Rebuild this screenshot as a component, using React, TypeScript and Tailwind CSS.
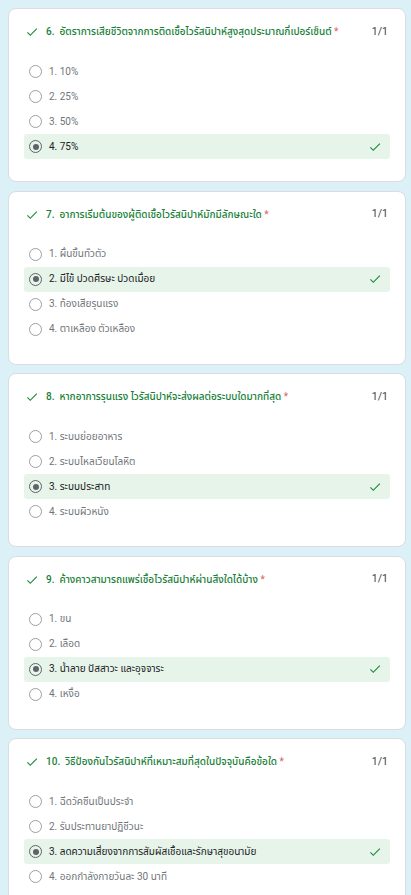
import React from "react";

type Q = { n: number; title: string; options: string[]; correct: number };

const questions: Q[] = [
  {
    n: 6,
    title: "อัตราการเสียชีวิตจากการติดเชื้อไวรัสนิปาห์สูงสุดประมาณกี่เปอร์เซ็นต์",
    options: ["1. 10%", "2. 25%", "3. 50%", "4. 75%"],
    correct: 3,
  },
  {
    n: 7,
    title: "อาการเริ่มต้นของผู้ติดเชื้อไวรัสนิปาห์มักมีลักษณะใด",
    options: ["1. ผื่นขึ้นทั่วตัว", "2. มีไข้ ปวดศีรษะ ปวดเมื่อย", "3. ท้องเสียรุนแรง", "4. ตาเหลือง ตัวเหลือง"],
    correct: 1,
  },
  {
    n: 8,
    title: "หากอาการรุนแรง ไวรัสนิปาห์จะส่งผลต่อระบบใดมากที่สุด",
    options: ["1. ระบบย่อยอาหาร", "2. ระบบไหลเวียนโลหิต", "3. ระบบประสาท", "4. ระบบผิวหนัง"],
    correct: 2,
  },
  {
    n: 9,
    title: "ค้างคาวสามารถแพร่เชื้อไวรัสนิปาห์ผ่านสิ่งใดได้บ้าง",
    options: ["1. ขน", "2. เลือด", "3. น้ำลาย ปัสสาวะ และอุจจาระ", "4. เหงื่อ"],
    correct: 2,
  },
  {
    n: 10,
    title: "วิธีป้องกันไวรัสนิปาห์ที่เหมาะสมที่สุดในปัจจุบันคือข้อใด",
    options: [
      "1. ฉีดวัคซีนเป็นประจำ",
      "2. รับประทานยาปฏิชีวนะ",
      "3. ลดความเสี่ยงจากการสัมผัสเชื้อและรักษาสุขอนามัย",
      "4. ออกกำลังกายวันละ 30 นาที",
    ],
    correct: 2,
  },
];

function Check({ className }: { className?: string }) {
  return (
    <svg viewBox="0 0 24 24" className={className} fill="currentColor">
      <path d="M9 16.17L4.83 12l-1.42 1.41L9 19 21 7l-1.41-1.41z" />
    </svg>
  );
}

function Card({ q }: { q: Q }) {
  return (
    <div className="h-[174px] shrink-0 rounded-lg border border-[#dadce0] bg-white px-[15px] pt-[16px]">
      <div className="flex h-[14px] items-center">
        <Check className="ml-[1px] h-[14px] w-[14px] text-[#1e8e3e]" />
        <div className="ml-[7px] flex-1 text-[10px] font-medium leading-none text-[#188038] whitespace-nowrap">
          {q.n}.&nbsp;&nbsp;{q.title} <span className="font-normal text-[#e0605a]">*</span>
        </div>
        <div className="mr-[2px] text-[10.5px] leading-none text-[#3c4043]">1/1</div>
      </div>
      <div className="mt-[20px] flex flex-col">
        {q.options.map((o, i) => {
          const sel = i === q.correct;
          return (
            <div
              key={i}
              className={
                sel
                  ? "flex h-[25px] items-center rounded-[3px] bg-[#e6f4ea] pl-[5px] pr-[8px]"
                  : "flex h-[25px] items-center pl-[5px] pr-[8px]"
              }
            >
              {sel ? (
                <div className="flex h-[13px] w-[13px] items-center justify-center rounded-full border-[1.5px] border-[#5f6368]">
                  <div className="h-[6px] w-[6px] rounded-full bg-[#5f6368]" />
                </div>
              ) : (
                <div className="h-[13px] w-[13px] rounded-full border-[1.5px] border-[#9aa0a6]" />
              )}
              <div
                className={
                  sel
                    ? "ml-[7px] flex-1 text-[10px] leading-none text-[#202124]"
                    : "ml-[7px] flex-1 text-[10px] leading-none text-[#70757a]"
                }
              >
                {o}
              </div>
              {sel && <Check className="h-[14px] w-[14px] text-[#1e8e3e]" />}
            </div>
          );
        })}
      </div>
    </div>
  );
}

export default function App() {
  return (
    <div
      className="flex h-[895px] flex-col gap-[8.5px] overflow-hidden bg-[#dcf0f8] pl-[8px] pr-[5px] pt-[8px]"
      style={{ fontFamily: "Roboto, 'Noto Sans', 'Noto Sans Thai', 'Liberation Sans', sans-serif" }}
    >
      {questions.map((q) => (
        <Card key={q.n} q={q} />
      ))}
    </div>
  );
}
